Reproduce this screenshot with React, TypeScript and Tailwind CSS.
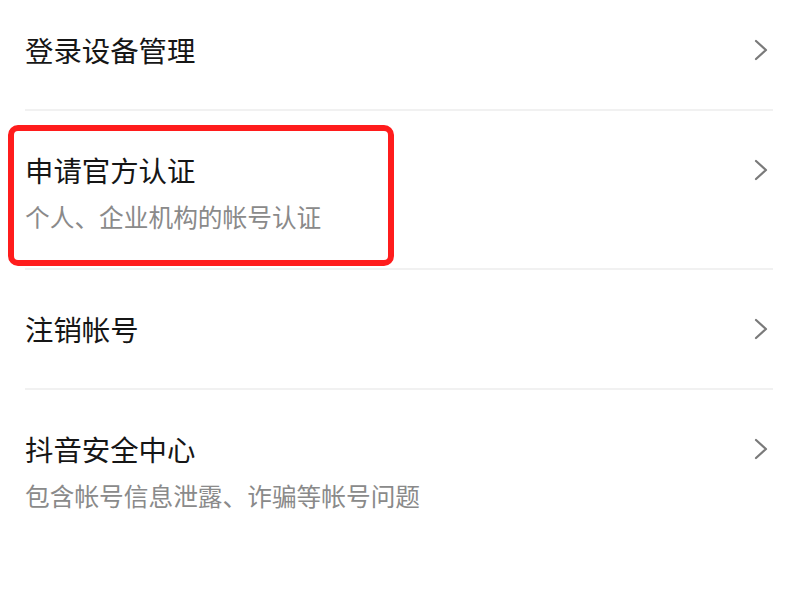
import React from "react";

interface RowProps {
  title: string;
  subtitle?: string;
  first?: boolean;
}

const Chevron = () => (
  <svg width="14" height="24" viewBox="0 0 14 24" fill="none">
    <polyline
      points="2,3 12,12 2,21"
      stroke="#7a7a7a"
      strokeWidth="2.2"
      strokeLinecap="round"
      strokeLinejoin="round"
    />
  </svg>
);

const Row: React.FC<RowProps> = ({ title, subtitle, first }) => (
  <div className={first ? "pt-[32px] pb-[41px]" : subtitle ? "pt-[41px] pb-[36px]" : "pt-[41px] pb-[41px]"}>
    <div className="flex items-center justify-between pl-[25px] pr-[32px]">
      <span className="text-[28.4px] leading-[36px] text-[#161616]">{title}</span>
      <Chevron />
    </div>
    {subtitle && (
      <div className="mt-[12px] pl-[25px] text-[24.7px] leading-[32px] text-[#8a8a8a]">
        {subtitle}
      </div>
    )}
  </div>
);

const Divider = () => <div className="mx-[25px] mr-[27px] h-[2px] bg-[#f1f1f1]" />;

export default function App() {
  return (
    <div
      className="relative w-[800px] h-[600px] overflow-hidden bg-white"
      style={{ fontFamily: '"Noto Sans CJK SC", "Noto Sans", sans-serif' }}
    >
      <Row first title="登录设备管理" />
      <Divider />
      <Row title="申请官方认证" subtitle="个人、企业机构的帐号认证" />
      <Divider />
      <Row title="注销帐号" />
      <Divider />
      <Row title="抖音安全中心" subtitle="包含帐号信息泄露、诈骗等帐号问题" />

      <div className="absolute left-[8px] top-[125px] w-[386px] h-[141px] border-[6px] border-[#ff1c1c] rounded-[10px]" />
    </div>
  );
}
